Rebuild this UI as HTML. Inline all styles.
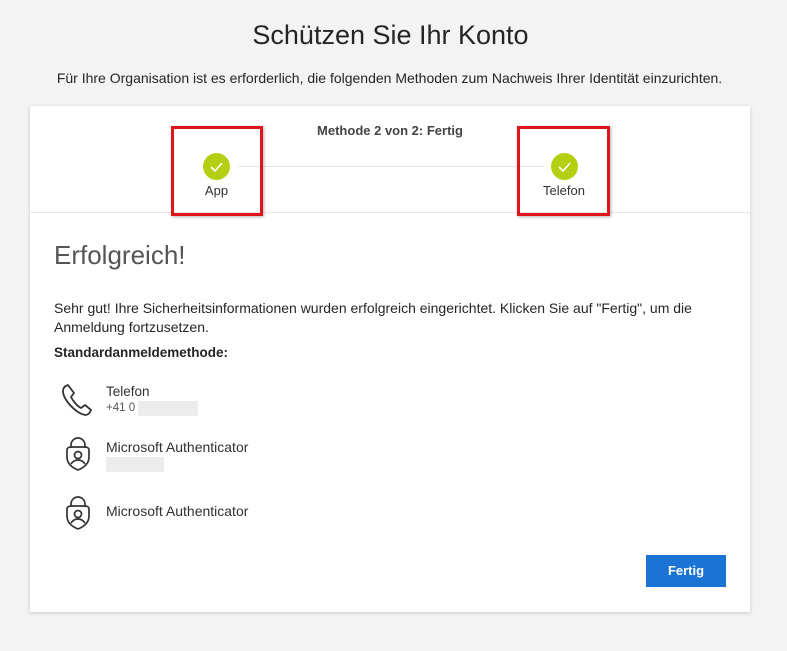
<!DOCTYPE html>
<html><head><meta charset="utf-8"><style>
*{margin:0;padding:0;box-sizing:border-box}
body{width:787px;height:651px;background:#f3f3f3;font-family:"Segoe UI","Liberation Sans",sans-serif;color:#323130;position:relative;overflow:hidden}
.a{position:absolute;white-space:nowrap}
.card{position:absolute;left:30px;top:106px;width:720px;height:506px;background:#fff;box-shadow:0 1px 4px rgba(0,0,0,.18)}
.circ{position:absolute;width:27px;height:27px;border-radius:50%;background:#b4cf12}
.red{position:absolute;border:3px solid #e0141b;box-shadow:1px 1px 3px rgba(0,0,0,.3)}
</style></head><body>
<div class="a" style="left:0;width:781px;text-align:center;top:20px;font-size:27px;color:#252525">Schützen Sie Ihr Konto</div>
<div class="a" style="left:0;width:779px;text-align:center;top:70px;font-size:14px;color:#252525">Für Ihre Organisation ist es erforderlich, die folgenden Methoden zum Nachweis Ihrer Identität einzurichten.</div>
<div class="card"></div>
<div class="a" style="left:30px;width:720px;top:212px;height:1px;background:#e8e8e8"></div>
<div class="a" style="left:0;width:780px;text-align:center;top:123px;font-size:13px;font-weight:bold;color:#444">Methode 2 von 2: Fertig</div>
<div class="a" style="left:238px;width:306px;top:166px;height:1px;background:#e6e6e6"></div>
<div class="circ" style="left:203px;top:153px"><svg width="27" height="27"><path d="M8 14l4 4 7-8" stroke="#fff" stroke-width="1.6" fill="none"/></svg></div>
<div class="circ" style="left:551px;top:153px"><svg width="27" height="27"><path d="M8 14l4 4 7-8" stroke="#fff" stroke-width="1.6" fill="none"/></svg></div>
<div class="a" style="left:171px;width:91px;text-align:center;top:183px;font-size:13px">App</div>
<div class="a" style="left:519px;width:90px;text-align:center;top:183px;font-size:13px">Telefon</div>
<div class="red" style="left:171px;top:126px;width:92px;height:90px"></div>
<div class="red" style="left:517px;top:126px;width:93px;height:90px"></div>
<div class="a" style="left:54px;top:240px;font-size:26px;font-weight:300;color:#555">Erfolgreich!</div>
<div class="a" style="left:54px;top:299px;font-size:14px;line-height:19px;color:#252525">Sehr gut! Ihre Sicherheitsinformationen wurden erfolgreich eingerichtet. Klicken Sie auf "Fertig", um die<br>Anmeldung fortzusetzen.</div>
<div class="a" style="left:54px;top:345px;font-size:13.5px;font-weight:bold;color:#252525">Standardanmeldemethode:</div>
<svg class="a" style="left:60px;top:382px" width="36" height="36" viewBox="0 0 36 36"><path d="M8 3c-3 1-5 3-5 6 0 8 12 22 22 24 3 0 5-2 6-5l-6-5-4 3c-4-2-8-7-10-11l3-4-6-8z" fill="none" stroke="#333" stroke-width="1.8" stroke-linejoin="round"/></svg>
<div class="a" style="left:106px;top:384px;font-size:13.5px">Telefon</div>
<div class="a" style="left:106px;top:402px;font-size:11.5px;color:#555">+41 0</div>
<div class="a" style="left:138px;top:401px;width:60px;height:15px;background:#ececec"></div>
<svg class="a" style="left:64px;top:436px" width="28" height="36" viewBox="0 0 28 36"><g fill="none" stroke="#333" stroke-width="1.7"><path d="M7 12V9a7 7 0 0 1 14 0v3"/><path d="M3 14c0-2 2-3 4-3h14c2 0 4 1 4 3v7c0 7-6 11-11 13C9 32 3 28 3 21z"/><circle cx="14" cy="19" r="3.5"/><path d="M7 28c2-3 4-4 7-4s5 1 7 4"/></g></svg>
<div class="a" style="left:106px;top:439px;font-size:14px">Microsoft Authenticator</div>
<div class="a" style="left:106px;top:457px;width:58px;height:15px;background:#ececec"></div>
<svg class="a" style="left:64px;top:495px" width="28" height="36" viewBox="0 0 28 36"><g fill="none" stroke="#333" stroke-width="1.7"><path d="M7 12V9a7 7 0 0 1 14 0v3"/><path d="M3 14c0-2 2-3 4-3h14c2 0 4 1 4 3v7c0 7-6 11-11 13C9 32 3 28 3 21z"/><circle cx="14" cy="19" r="3.5"/><path d="M7 28c2-3 4-4 7-4s5 1 7 4"/></g></svg>
<div class="a" style="left:106px;top:503px;font-size:14px">Microsoft Authenticator</div>
<div class="a" style="left:646px;top:555px;width:80px;height:32px;background:#1b74d3;color:#fff;font-size:13px;font-weight:bold;text-align:center;line-height:32px">Fertig</div>
</body></html>
